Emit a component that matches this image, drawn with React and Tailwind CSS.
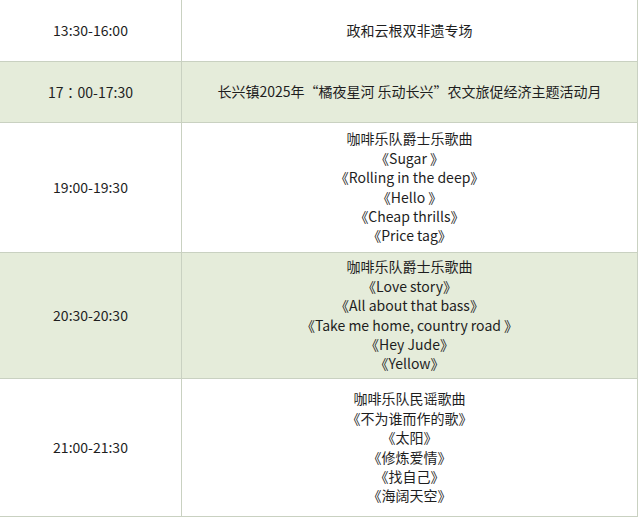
const rows = [
  { time: "13:30-16:00", h: "h-[62px]", green: false, lines: ["政和云根双非遗专场"] },
  {
    time: "17：00-17:30",
    h: "h-[61px]",
    green: true,
    lines: ["长兴镇2025年“橘夜星河 乐动长兴”农文旅促经济主题活动月"],
  },
  {
    time: "19:00-19:30",
    h: "h-[130px]",
    green: false,
    lines: ["咖啡乐队爵士乐歌曲", "《Sugar 》", "《Rolling in the deep》", "《Hello 》", "《Cheap thrills》", "《Price tag》"],
  },
  {
    time: "20:30-20:30",
    h: "h-[126px]",
    green: true,
    lines: [
      "咖啡乐队爵士乐歌曲",
      "《Love story》",
      "《All about that bass》",
      "《Take me home, country road 》",
      "《Hey Jude》",
      "《Yellow》",
    ],
  },
  {
    time: "21:00-21:30",
    h: "h-[138px]",
    green: false,
    lines: ["咖啡乐队民谣歌曲", "《不为谁而作的歌》", "《太阳》", "《修炼爱情》", "《找自己》", "《海阔天空》"],
  },
];

export default function App() {
  return (
    <div className="h-[519px] w-[640px] bg-white font-['Noto_Sans_CJK_SC',sans-serif] text-[14px] text-[#1e1e1e]">
      <div className="w-[638px] border-r border-[#c9d1c1]">
        {rows.map((r) => (
          <div
            key={r.time}
            className={`grid grid-cols-[182px_1fr] border-b border-[#c9d1c1] ${r.h} ${r.green ? "bg-[#e5ecda]" : "bg-white"}`}
          >
            {/* JP face centres the full-width colon like the original */}
            <div className="flex items-center justify-center border-r border-[#c9d1c1] font-['Noto_Sans_CJK_JP',sans-serif]">
              {r.time}
            </div>
            <div className="flex flex-col items-center justify-center leading-[19.4px]">
              {r.lines.map((l, i) => (
                <div key={i} className="whitespace-pre">
                  {l}
                </div>
              ))}
            </div>
          </div>
        ))}
      </div>
    </div>
  );
}
